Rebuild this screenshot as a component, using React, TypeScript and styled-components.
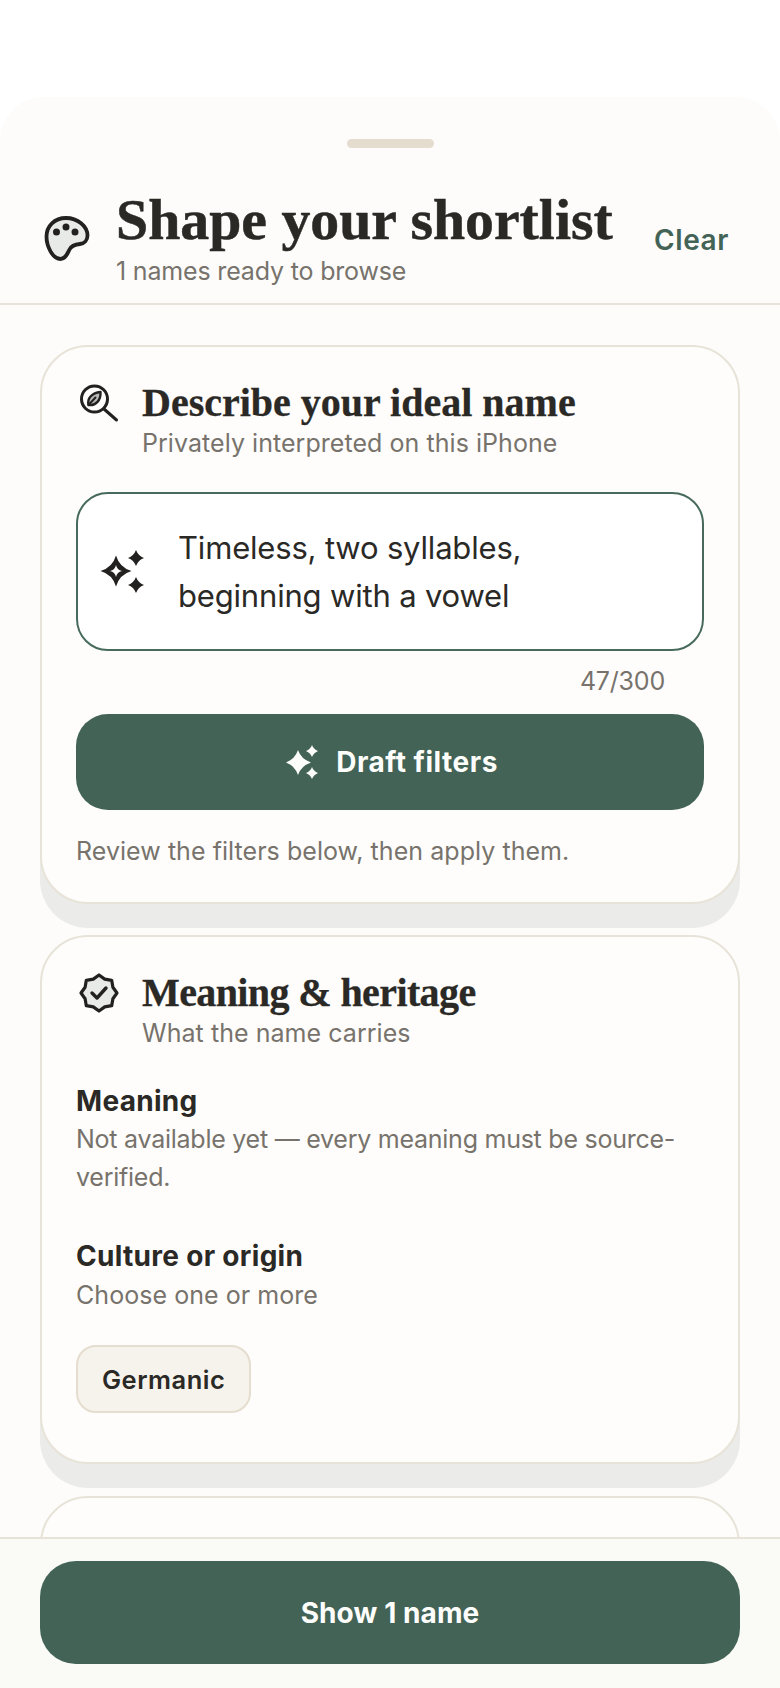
import React from 'react';
import styled, { createGlobalStyle } from 'styled-components';

const serif = `'Liberation Serif', 'DejaVu Serif', serif`;
const sans = `Inter, 'Noto Sans', sans-serif`;

const green = '#426356';
const ink = '#2a2926';
const muted = '#77736c';
const line = '#e8e3d8';

const GlobalStyle = createGlobalStyle`
  html, body {
    margin: 0;
    background: #ffffff;
  }
  * {
    box-sizing: border-box;
  }
`;

const Page = styled.div`
  display: flex;
  flex-direction: column;
  width: 780px;
  height: 1688px;
  padding-top: 97px;
  overflow: hidden;
  font-family: ${sans};
`;

const Sheet = styled.div`
  flex: 1;
  min-height: 0;
  display: flex;
  flex-direction: column;
  background: #fdfcfa;
  border-radius: 44px 44px 0 0;
  overflow: hidden;
`;

const Handle = styled.div`
  align-self: center;
  flex: none;
  width: 87px;
  height: 9px;
  margin-top: 42px;
  border-radius: 5px;
  background: #e3dccf;
`;

const Header = styled.header`
  flex: none;
  display: flex;
  height: 157px;
  padding: 44px 51px 0 44px;
  border-bottom: 2px solid ${line};
`;

const HeaderIcon = styled.div`
  flex: none;
  width: 48px;
  height: 48px;
  margin: 23px 24px 0 0;
`;

const HeaderText = styled.div`
  flex: 1;
  min-width: 0;
`;

const Title = styled.h1`
  margin: 0;
  font-family: ${serif};
  font-size: 57.8px;
  font-weight: 700;
  line-height: 56px;
  -webkit-text-stroke: 0.5px ${ink};
  white-space: nowrap;
  color: ${ink};
`;

const Subtitle = styled.div`
  margin-top: 5px;
  font-size: 25px;
  line-height: 36px;
  letter-spacing: -0.17px;
  color: ${muted};
`;

const ClearLink = styled.button`
  flex: none;
  align-self: flex-start;
  margin-top: 30px;
  padding: 0;
  border: 0;
  background: none;
  font-family: ${sans};
  font-size: 28px;
  font-weight: 600;
  line-height: 36px;
  letter-spacing: 0.6px;
  color: ${green};
`;

const Scroller = styled.main`
  flex: 1;
  min-height: 0;
  display: flex;
  flex-direction: column;
  gap: 31px;
  padding: 40px 40px 0;
  overflow: hidden;
`;

const Card = styled.section<{ $bottom: number }>`
  flex: none;
  padding: 34px 34px ${(p) => p.$bottom}px;
  background: #fefdfb;
  border: 2px solid ${line};
  border-radius: 48px;
  box-shadow: 0 24px 0 #ebebe9;
`;

const EmptyCard = styled(Card)`
  height: 120px;
  margin-top: 1px;
  box-shadow: none;
`;

const CardHead = styled.div`
  display: flex;
  gap: 22px;
`;

const CardIcon = styled.div`
  flex: none;
  width: 42px;
  height: 42px;
  margin-left: 2px;
`;

const CardTitle = styled.h2<{ $spacing?: number }>`
  margin: 0;
  font-family: ${serif};
  font-size: 40px;
  font-weight: 700;
  line-height: 44px;
  letter-spacing: ${(p) => p.$spacing ?? 0}px;
  -webkit-text-stroke: 0.3px ${ink};
  white-space: nowrap;
  color: ${ink};
`;

const Hint = styled.div<{ $top?: number }>`
  margin-top: ${(p) => p.$top ?? 0}px;
  font-size: 25px;
  line-height: 36px;
  letter-spacing: 0.05px;
  color: ${muted};
`;

const Prompt = styled.div`
  display: flex;
  align-items: center;
  gap: 32px;
  height: 159px;
  margin-top: 31px;
  padding: 0 22px;
  background: #ffffff;
  border: 2.5px solid #476a5c;
  border-radius: 32px;
`;

const PromptIcon = styled.div`
  flex: none;
  width: 46px;
  height: 46px;
`;

const PromptText = styled.div`
  font-size: 31px;
  line-height: 48px;
  letter-spacing: -0.18px;
  color: ${ink};
`;

const Counter = styled.div`
  margin: 14px 39px 0 0;
  font-size: 25px;
  line-height: 32px;
  letter-spacing: -0.2px;
  text-align: right;
  color: ${muted};
`;

const PrimaryButton = styled.button<{ $height: number; $radius: number; $top?: number; $spacing: number; $inset?: number }>`
  display: flex;
  align-items: center;
  justify-content: center;
  gap: 16px;
  width: 100%;
  height: ${(p) => p.$height}px;
  margin-top: ${(p) => p.$top ?? 0}px;
  padding: 0 0 0 ${(p) => p.$inset ?? 0}px;
  border: 0;
  border-radius: ${(p) => p.$radius}px;
  background: ${green};
  font-family: ${sans};
  font-size: 28px;
  font-weight: 700;
  letter-spacing: ${(p) => p.$spacing}px;
  color: #fdfdfb;
`;

const FieldLabel = styled.div<{ $top: number }>`
  margin-top: ${(p) => p.$top}px;
  font-size: 28px;
  font-weight: 700;
  line-height: 36px;
  letter-spacing: 0.3px;
  color: ${ink};
`;

const FieldNote = styled.div`
  margin-top: 1px;
  font-size: 25px;
  line-height: 38px;
  letter-spacing: -0.25px;
  color: ${muted};
`;

const Chips = styled.div`
  display: flex;
  flex-wrap: wrap;
  gap: 12px;
  margin-top: 32px;
`;

const Chip = styled.div`
  display: flex;
  align-items: center;
  height: 68px;
  padding: 0 24px;
  background: #f6f3ec;
  border: 2px solid #e5ddcf;
  border-radius: 20px;
  font-size: 25.5px;
  font-weight: 600;
  letter-spacing: 0.5px;
  color: ${ink};
`;

const Footer = styled.footer`
  flex: none;
  padding: 22px 40px 24px;
  background: #fafaf6;
  border-top: 2px solid ${line};
`;

const PaletteIcon = () => (
  <svg viewBox="0 0 48 48" width="48" height="48" fill="none" stroke="#22211f" strokeWidth="3.8">
    <path
      d="M22 3C10.500 3 2.500 11 2.500 21.500 2.500 31 8.500 44 16.500 44 21.500 44 23.500 38.500 25.500 34.500 27.500 30.500 31 29.500 36 29 40.500 28.500 43.500 25 43.500 20.500 43.500 11 33.500 3 22 3Z"
      fill="#e8eae8"
      strokeLinejoin="round"
    />
    <circle cx="12.500" cy="17" r="2.600" fill="#22211f" strokeWidth="1.800" />
    <circle cx="22" cy="12" r="2.600" fill="#22211f" strokeWidth="1.800" />
    <circle cx="31" cy="17" r="2.600" fill="#22211f" strokeWidth="1.800" />
  </svg>
);

const LeafSearchIcon = () => (
  <svg viewBox="0 0 42 42" width="42" height="42" fill="none" stroke="#22211f" strokeWidth="3" strokeLinecap="round" strokeLinejoin="round">
    <circle cx="16.500" cy="18" r="13" />
    <path d="M26 28 38.500 39" />
    <path d="M10.500 24C9 17 14 12 22.500 11 23 19 18 25 10.500 24Z" strokeWidth="2.400" fill="#b9bbb8" />
    <path d="M10.500 24 17.500 16.500" strokeWidth="2" />
  </svg>
);

const SparkOutlineIcon = () => (
  <svg viewBox="0 0 46 46" width="46" height="46" fill="#22211f" stroke="none">
    <path
      fillRule="evenodd"
      d="M16 6.500Q19.500 18.500 31.500 22 19.500 25.500 16 37.500 12.500 25.500 0.500 22 12.500 18.500 16 6.500ZM16 16Q17 21 22 22 17 23 16 28 15 23 10 22 15 21 16 16Z"
    />
    <path d="M36 1Q38.200 6.800 44 9 38.200 11.200 36 17 33.800 11.200 28 9 33.800 6.800 36 1Z" />
    <path d="M36 28Q38.200 33.800 44 36 38.200 38.200 36 44 33.800 38.200 28 36 33.800 33.800 36 28Z" />
  </svg>
);

const SparkFilledIcon = () => (
  <svg viewBox="0 0 34 34" width="34" height="34" fill="#fdfdfb" stroke="none">
    <path d="M12 5Q15 14 25 17.500 15 21 12 30 9 21 0 17.500 9 14 12 5Z" />
    <path d="M26 0Q27.500 4 32 6 27.500 8 26 12 24.500 8 20 6 24.500 4 26 0Z" />
    <path d="M26 22Q27.500 26 32 28 27.500 30 26 34 24.500 30 20 28 24.500 26 26 22Z" />
  </svg>
);

const BadgeIcon = () => (
  <svg viewBox="0 0 42 42" width="42" height="42" fill="none" stroke="#22211f" strokeWidth="3.2" strokeLinecap="round" strokeLinejoin="round">
    <path
      d="M21 4 26.700 8.100 33.700 9.300 34.900 16.300 39 22 34.900 27.700 33.700 34.700 26.700 35.900 21 40 15.300 35.900 8.300 34.700 7.100 27.700 3 22 7.100 16.300 8.300 9.300 15.300 8.100Z"
      fill="#e8eae8"
    />
    <path d="M14 22 19 27 28 17" strokeWidth="3.400" />
  </svg>
);

const App: React.FC = () => {
  return (
    <>
      <GlobalStyle />
      <Page>
        <Sheet>
          <Handle />
          <Header>
            <HeaderIcon>
              <PaletteIcon />
            </HeaderIcon>
            <HeaderText>
              <Title>Shape your shortlist</Title>
              <Subtitle>1 names ready to browse</Subtitle>
            </HeaderText>
            <ClearLink>Clear</ClearLink>
          </Header>
          <Scroller>
            <Card $bottom={33}>
              <CardHead>
                <CardIcon>
                  <LeafSearchIcon />
                </CardIcon>
                <div>
                  <CardTitle>Describe your ideal name</CardTitle>
                  <Hint>Privately interpreted on this iPhone</Hint>
                </div>
              </CardHead>
              <Prompt>
                <PromptIcon>
                  <SparkOutlineIcon />
                </PromptIcon>
                <PromptText>
                  Timeless, two syllables,
                  <br />
                  beginning with a vowel
                </PromptText>
              </Prompt>
              <Counter>47/300</Counter>
              <PrimaryButton $height={96} $radius={32} $top={17} $spacing={0.5} $inset={4}>
                <SparkFilledIcon />
                Draft filters
              </PrimaryButton>
              <Hint $top={23}>Review the filters below, then apply them.</Hint>
            </Card>
            <Card $bottom={49}>
              <CardHead>
                <CardIcon>
                  <BadgeIcon />
                </CardIcon>
                <div>
                  <CardTitle $spacing={-0.6}>Meaning &amp; heritage</CardTitle>
                  <Hint>What the name carries</Hint>
                </div>
              </CardHead>
              <FieldLabel $top={32}>Meaning</FieldLabel>
              <FieldNote>
                Not available yet — every meaning must be source-
                <br />
                verified.
              </FieldNote>
              <FieldLabel $top={42}>Culture or origin</FieldLabel>
              <Hint $top={3}>Choose one or more</Hint>
              <Chips>
                <Chip>Germanic</Chip>
              </Chips>
            </Card>
            <EmptyCard $bottom={0} />
          </Scroller>
          <Footer>
            <PrimaryButton $height={103} $radius={36} $spacing={0.1}>
              Show 1 name
            </PrimaryButton>
          </Footer>
        </Sheet>
      </Page>
    </>
  );
};

export default App;
